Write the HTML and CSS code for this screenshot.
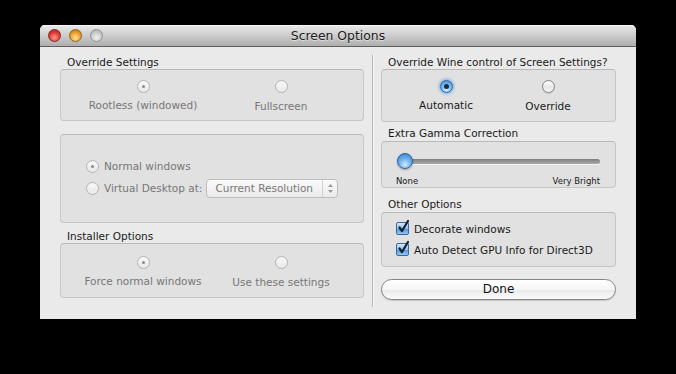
FILE: index.html
```html
<!DOCTYPE html>
<html lang="en">
<head>
    <meta charset="UTF-8">
    <title>Screen Options</title>
    <link rel="stylesheet" href="styles.css">
</head>
<body>
    <div class="window">
        <div class="titlebar">
            <div class="lights">
                <span class="light close"></span>
                <span class="light minimize"></span>
                <span class="light zoom"></span>
            </div>
            <div class="title">Screen Options</div>
        </div>

        <div class="content">
            <!-- Left column -->
            <div class="column column-left">
                <div class="group-title">Override Settings</div>
                <div class="box choice-box">
                    <div class="choice">
                        <span class="radio disabled checked"></span>
                        <span class="choice-label muted">Rootless (windowed)</span>
                    </div>
                    <div class="choice">
                        <span class="radio disabled"></span>
                        <span class="choice-label muted lower">Fullscreen</span>
                    </div>
                </div>

                <div class="box mode-box">
                    <div class="row">
                        <span class="radio disabled checked"></span>
                        <span class="row-label muted">Normal windows</span>
                    </div>
                    <div class="row">
                        <span class="radio disabled"></span>
                        <span class="row-label muted">Virtual Desktop at:</span>
                        <div class="popup">
                            <span class="popup-text">Current Resolution</span>
                            <span class="popup-arrows">
                                <svg width="7" height="11" viewBox="0 0 7 11">
                                    <path d="M3.5 1 L6 4 L1 4 Z" fill="#9a9a9a"/>
                                    <path d="M3.5 10 L6 7 L1 7 Z" fill="#9a9a9a"/>
                                </svg>
                            </span>
                        </div>
                    </div>
                </div>

                <div class="group-title installer-title">Installer Options</div>
                <div class="box choice-box installer-box">
                    <div class="choice">
                        <span class="radio disabled checked"></span>
                        <span class="choice-label muted">Force normal windows</span>
                    </div>
                    <div class="choice">
                        <span class="radio disabled"></span>
                        <span class="choice-label muted lower">Use these settings</span>
                    </div>
                </div>
            </div>

            <div class="divider"></div>

            <!-- Right column -->
            <div class="column column-right">
                <div class="group-title">Override Wine control of Screen Settings?</div>
                <div class="box choice-box wine-box">
                    <div class="choice">
                        <span class="radio selected checked"></span>
                        <span class="choice-label">Automatic</span>
                    </div>
                    <div class="choice">
                        <span class="radio"></span>
                        <span class="choice-label lower">Override</span>
                    </div>
                </div>

                <div class="group-title gamma-title">Extra Gamma Correction</div>
                <div class="box gamma-box">
                    <div class="slider">
                        <div class="track"></div>
                        <span class="knob"></span>
                    </div>
                    <div class="scale">
                        <span>None</span>
                        <span>Very Bright</span>
                    </div>
                </div>

                <div class="group-title other-title">Other Options</div>
                <div class="box options-box">
                    <div class="row">
                        <span class="checkbox">
                            <svg width="15" height="16" viewBox="0 0 15 16">
                                <path d="M3.5 8.5 L6 12 L12 2" fill="none" stroke="#18212c" stroke-width="2.2" stroke-linecap="round" stroke-linejoin="round"/>
                            </svg>
                        </span>
                        <span class="row-label">Decorate windows</span>
                    </div>
                    <div class="row">
                        <span class="checkbox">
                            <svg width="15" height="16" viewBox="0 0 15 16">
                                <path d="M3.5 8.5 L6 12 L12 2" fill="none" stroke="#18212c" stroke-width="2.2" stroke-linecap="round" stroke-linejoin="round"/>
                            </svg>
                        </span>
                        <span class="row-label">Auto Detect GPU Info for Direct3D</span>
                    </div>
                </div>

                <button class="done-button">Done</button>
            </div>
        </div>
    </div>
</body>
</html>
```

FILE: styles.css
```css
/* Page */
body {
    margin: 0;
    background-color: #000;
    font-family: 'DejaVu Sans', 'Lucida Grande', sans-serif;
    font-size: 10.5px;
    color: #1a1a1a;
}

/* Window frame */
.window {
    margin: 25px 0 0 40px;
    width: 596px;
    height: 294px;
    background-color: #eaeaea;
    border-radius: 5px 5px 0 0;
    overflow: hidden;
}
.titlebar {
    height: 21px;
    display: grid;
    grid-template-columns: 1fr auto 1fr;
    align-items: center;
    background: linear-gradient(#ebebeb, #c9c9c9 55%, #aeaeae);
    border-bottom: 1px solid #5f5f5f;
    box-shadow: inset 0 1px 0 #f6f6f6;
}
.lights {
    display: flex;
    gap: 8px;
    padding-left: 8px;
}
.light {
    width: 13px;
    height: 13px;
    box-sizing: border-box;
    border-radius: 50%;
}
.light.close {
    background: radial-gradient(circle at 50% 70%, #ff9a90 0%, #e64a40 45%, #ad160f 100%);
    border: 1px solid #86241f;
}
.light.minimize {
    background: radial-gradient(circle at 50% 70%, #ffe7a6 0%, #f5a83a 45%, #b96c0d 100%);
    border: 1px solid #92601c;
}
.light.zoom {
    background: radial-gradient(circle at 50% 70%, #f2f2f2 0%, #cdcdcd 50%, #a9a9a9 100%);
    border: 1px solid #939393;
}
.title {
    font-size: 12.4px;
    line-height: 21px;
    color: #202020;
    text-shadow: 0 1px 0 rgba(255, 255, 255, 0.5);
}

/* Content */
.content {
    display: flex;
    padding: 8px 20px 0 20px;
}
.column {
    display: flex;
    flex-direction: column;
}
.column-left { width: 304px; }
.column-right { width: 235px; }
.divider {
    width: 1px;
    height: 252px;
    margin: 0 8px;
    background-color: #b6b6b6;
    box-shadow: 1px 0 0 #f7f7f7;
}

.group-title {
    line-height: 14px;
    padding-left: 7px;
    white-space: nowrap;
}
.installer-title { margin-top: 6px; }
.gamma-title { margin-top: 4px; }
.other-title { margin-top: 9px; }

.box {
    box-sizing: border-box;
    background-color: #e1e1e1;
    border: 1px solid #c6c6c6;
    border-top-color: #b9b9b9;
    border-radius: 4px;
}
.muted { color: #777; }

/* Radios laid out side by side */
.choice-box {
    display: flex;
    height: 52px;
    padding: 10px 0 0 13px;
}
.choice {
    width: 138px;
    display: flex;
    flex-direction: column;
    align-items: center;
}
.choice-label {
    margin-top: 5px;
    line-height: 14px;
    white-space: nowrap;
}
.choice-label.lower { margin-top: 6px; }
.installer-box {
    height: 55px;
    padding-top: 12px;
}
.wine-box { height: 53px; }
.wine-box .choice { width: 102px; }

.radio {
    position: relative;
    flex: none;
    width: 13px;
    height: 13px;
    box-sizing: border-box;
    border-radius: 50%;
    border: 1px solid #858585;
    background: linear-gradient(#ffffff, #e6e6e6 55%, #f7f7f7);
    box-shadow: 0 1px 1px rgba(0, 0, 0, 0.12);
}
.radio.disabled {
    border-color: #b4b4b4;
    background: linear-gradient(#f8f8f8, #e9e9e9);
    box-shadow: none;
}
.radio.checked::after {
    content: '';
    position: absolute;
    left: 3px;
    top: 3px;
    width: 5px;
    height: 5px;
    border-radius: 50%;
    background-color: #1d2a3a;
}
.radio.disabled.checked::after {
    left: 4px;
    top: 4px;
    width: 3px;
    height: 3px;
    background-color: #8c8c8c;
}
.radio.selected {
    border-color: #2f63a3;
    background: radial-gradient(circle at 50% 75%, #d8f0ff 0%, #86c3f4 40%, #3b86d9 100%);
    box-shadow: 0 0 3px 1px rgba(80, 150, 230, 0.7);
}

/* Stacked rows */
.mode-box {
    height: 89px;
    margin-top: 13px;
    padding: 20px 0 0 25px;
}
.row {
    height: 22px;
    display: flex;
    align-items: center;
}
.row-label {
    margin-left: 5px;
    white-space: nowrap;
}
.popup {
    margin-left: 4px;
    width: 132px;
    height: 19px;
    box-sizing: border-box;
    display: flex;
    align-items: center;
    border: 1px solid #bcbcbc;
    border-radius: 4px;
    background: linear-gradient(#fafafa, #ebebeb);
    color: #777;
}
.popup-text {
    flex: 1;
    padding-left: 8px;
    white-space: nowrap;
}
.popup-arrows {
    width: 14px;
    height: 100%;
    display: flex;
    align-items: center;
    justify-content: center;
    border-left: 1px solid #d2d2d2;
}

/* Gamma slider */
.gamma-box {
    height: 47px;
    margin-top: 1px;
    padding: 10px 15px 0 14px;
}
.slider {
    position: relative;
    height: 18px;
    display: flex;
    align-items: center;
}
.track {
    flex: 1;
    margin-left: 7px;
    height: 5px;
    border-radius: 3px;
    background: linear-gradient(#7f7f7f, #a9a9a9);
    box-shadow: 0 1px 0 rgba(255, 255, 255, 0.6);
}
.knob {
    position: absolute;
    left: 1px;
    top: 1px;
    width: 16px;
    height: 16px;
    box-sizing: border-box;
    border-radius: 50%;
    border: 1px solid #2c5f9c;
    background: radial-gradient(circle at 50% 75%, #cfeaff 0%, #7ab9ef 40%, #2f77c9 100%);
    box-shadow: 0 1px 2px rgba(0, 0, 0, 0.3);
}
.scale {
    display: flex;
    justify-content: space-between;
    margin-top: 6px;
    font-size: 8.5px;
    line-height: 11px;
}

/* Other options */
.options-box {
    height: 55px;
    margin-top: 1px;
    padding: 5px 0 0 14px;
}
.options-box .row { height: 21px; }
.checkbox {
    position: relative;
    flex: none;
    width: 13px;
    height: 13px;
    box-sizing: border-box;
    border: 1px solid #3a679c;
    border-radius: 2px;
    background: linear-gradient(#d3eafd, #8cc0f0 50%, #4f94e0 52%, #93caf5);
}
.checkbox svg {
    position: absolute;
    left: -1px;
    top: -4px;
}

.done-button {
    margin-top: 12px;
    height: 21px;
    padding: 0;
    border: 1px solid #858585;
    border-radius: 11px;
    background: linear-gradient(#ffffff, #f6f6f6 50%, #e9e9e9 52%, #fbfbfb);
    font-family: 'DejaVu Sans', 'Lucida Grande', sans-serif;
    font-size: 12px;
    line-height: 19px;
    color: #111;
    box-shadow: 0 1px 1px rgba(0, 0, 0, 0.15);
}
```
